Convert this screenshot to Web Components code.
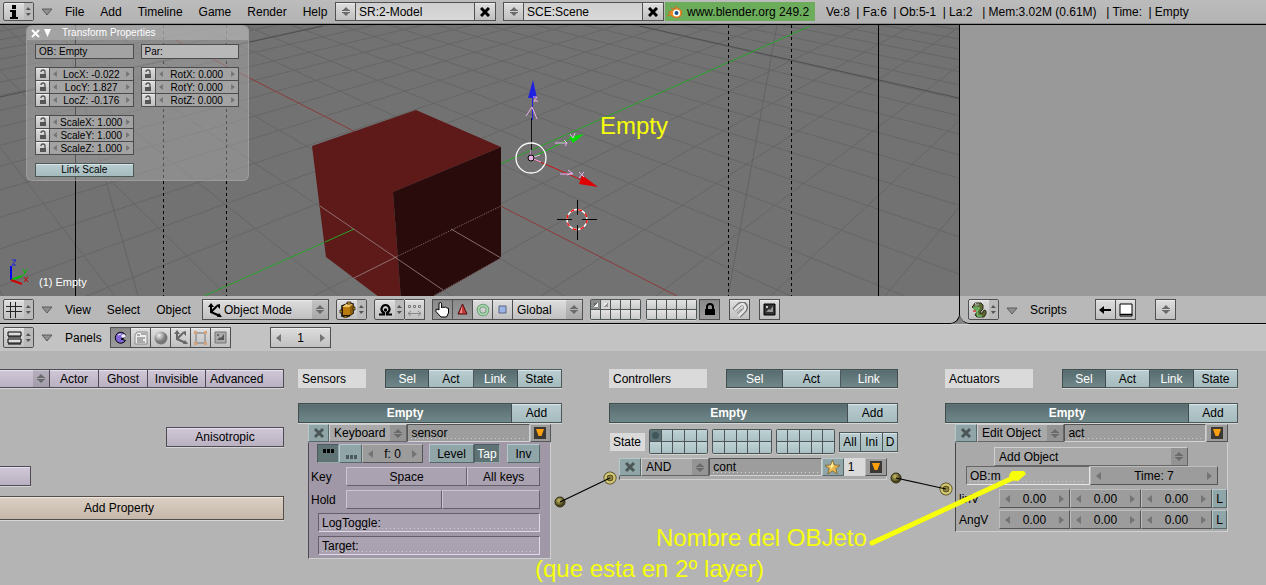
<!DOCTYPE html>
<html lang="en">
<head>
<meta charset="utf-8">
<title>Blender</title>
<style>
  body { margin: 0; background: #b4b4b4; color: #000; font: 12px/14px "Liberation Sans", Arial, sans-serif; }
</style>
</head>
<body>
<bl-app></bl-app>

<script>
const BASE = `
  *, :host { box-sizing: border-box; }
  :host { display: block; min-width: 0; }
  button, input, select { font: inherit; color: inherit; margin: 0; padding: 0; min-width: 0; border-radius: 0; outline: 0; }
  svg { display: block; }
`;

function define(name, css, html, setup) {
  const tpl = document.createElement('template');
  tpl.innerHTML = `<style>${BASE}${css}</style>${html}`;
  customElements.define(name, class extends HTMLElement {
    constructor() {
      super();
      this.attachShadow({ mode: 'open' }).append(tpl.content.cloneNode(true));
    }
    connectedCallback() { if (setup) setup.call(this, this.shadowRoot); }
  });
}

/* ---------- icons ---------- */
const ICONS = {
  info: [14, 16, `<path d="M5 1h4v4H5zM3 6h6v7h2v2H3v-2h2V8H3z" fill="#000"/>`],
  combo: [10, 9, `<path d="M5 0 8 3H2zM1 3h8v1H1zM1 5h8v1H1zM5 9 2 6h6z" fill="#6a6a6a"/>`],
  small: [5, 10, `<path d="M2 0 5 3H0zM2 9 0 6h5z" fill="#555"/>`],
  fold: [12, 8, `<path d="M1 1h10L6 7z" fill="#909090" stroke="#5c5c5c"/>`],
  x: [10, 10, `<path d="M1 1 9 9M9 1 1 9" stroke="#000" stroke-width="3"/>`],
  xdim: [12, 12, `<path d="M2 2l8 8M10 2l-8 8" stroke="#4b5657" stroke-width="3"/>`],
  grid: [16, 16, `<path d="M4.500 0v16M9.500 0v16M0 4.500h16M0 9.500h16" stroke="#222"/>`],
  rows: [15, 14, `<path d="M1 1h13v4H1zM1 8h13v4H1z" fill="#ddd" stroke="#000"/><path d="M1 6h13M1 13h13" stroke="#000"/>`],
  blender: [16, 14, `<path d="M8 1 15 6 14 11 10 13 6 12 4 10 0 11 4 8 1 7 7 5 4 3 9 4z" fill="#f08a24" stroke="#c8621a" stroke-width=".5"/><circle cx="9.500" cy="8" r="3.600" fill="#fff"/><circle cx="9.500" cy="8" r="2" fill="#1d4f86"/>`],
  mode: [16, 15, `<path d="M4 2v7l9 4M4 9l6-6" fill="none" stroke="#000" stroke-width="2"/><path d="M4 0 7 4H1zM13 1v5L9 2zM15 14l-5 0 2-4z" fill="#000"/>`],
  axes: [16, 15, `<path d="M4 2v7l9 4M4 9l6-6" fill="none" stroke="#666" stroke-width="2"/><path d="M4 0 7 4H1zM13 1v5L9 2zM15 14l-5 0 2-4z" fill="#666"/>`],
  cube: [17, 17, `<path d="M3 5 8 3h6v9l-4 3H3z" fill="#b77b10" stroke="#000" stroke-width="1.500"/><path d="M3 6 7 3h7l-4 3z" fill="#f2c86c"/><path d="M11 6l3-3v9l-3 3z" fill="#8f5f08"/><path d="M8 1h4v2H8zM5 15h3v2H5zM1 9h2v3H1zM14 6h2v3h-2z" fill="#e0a83a" stroke="#000" stroke-width=".7"/>`],
  pivot: [15, 15, `<path d="M1 12.500h5V11Q3 9 3.500 6.500 4.500 3 7.500 3T11.500 6.500Q12 9 9 11v1.500h5" fill="none" stroke="#000" stroke-width="2.200"/><circle cx="7.500" cy="8" r="1.700"/>`],
  center: [15, 14, `<path d="M1.500 2.500h2v2h-2zM6.500 2.500h2v2h-2zM11.500 2.500h2v2h-2z" fill="#ddd" stroke="#777"/><path d="M1 10.500h13M4 8l-3 2.500L4 13M11 8l3 2.500-3 2.500" stroke="#888" fill="none"/>`],
  hand: [17, 17, `<path d="M5 9V3q0-1.500 1.300-1.500T7.600 3v4l1-1 1.500.500 1.300-.500 1.500 1 1.600.300V12l-2 4H7L2 10.500Q1.300 8 3 8z" fill="#fff" stroke="#000"/>`],
  cone: [11, 13, `<path d="M5.500 1 10 11H1z" fill="#c93b3b" stroke="#501010"/><path d="M5 3 3 10h2z" fill="#f19a9a"/>`],
  ring: [14, 14, `<circle cx="7" cy="7" r="4.500" fill="none" stroke="#5f8f68" stroke-width="3.500"/><circle cx="7" cy="7" r="4.500" fill="none" stroke="#a6d7ae" stroke-width="2"/>`],
  square: [9, 9, `<path d="M1 1h7v7H1z" fill="#9db4e6" stroke="#5b6482"/>`],
  lock: [12, 13, `<path d="M3 6V4q0-3 3-3t3 3v2" fill="none" stroke="#000" stroke-width="2"/><path d="M1 6h10v6H1z" fill="#000"/>`],
  open: [8, 10, `<path d="M2 3q0-2 2-2t2 2v2" fill="none" stroke="#555" stroke-width="1.300"/><path d="M1 5h6v4H1z" fill="#555"/>`],
  magnet: [16, 16, `<path d="M2 8 7 3q4-3 6 0 2 3-1 6l-5 5" fill="none" stroke="#777" stroke-width="4.500"/><path d="M2.500 8 7 3.500q4-3 5.500 0 2 3-1 5.500L6.500 14" fill="none" stroke="#e5e5e5" stroke-width="2.500"/><path d="M5 11 10 7" stroke="#888"/>`],
  render: [13, 13, `<path d="M1 1h11v11H1z" fill="#333" stroke="#000"/><path d="M3 9 6 6l1 1 3-4v6z" fill="#999"/><path d="M3 3h2v2H3z" fill="#ccc"/>`],
  scene: [13, 13, `<path d="M1 1h11v11H1z" fill="#aaa" stroke="#777"/><path d="M3 9 6 6l1 1 3-4v6z" fill="#555"/><path d="M3 3h2v2H3z" fill="#666"/>`],
  pac: [13, 13, `<path d="M11.500 4A5.500 5.500 0 1 0 11.500 9.500L7 8l3-1z" fill="#8064d8" stroke="#000"/><path d="M4 4l3-1M8 4h3v2H8z" stroke="#eee" fill="#fff"/>`],
  script: [14, 14, `<path d="M3 1h10v12H1V4z" fill="#eee" stroke="#888"/><path d="M3 4h3M7 3h5M3 7h8M3 9h6M3 11h8" stroke="#666"/>`],
  ball: [14, 14, `<defs><radialGradient id="b" cx=".35" cy=".3"><stop offset="0" stop-color="#eee"/><stop offset="1" stop-color="#777"/></radialGradient></defs><circle cx="7" cy="7" r="6.500" fill="url(#b)"/>`],
  edit: [13, 14, `<path d="M2 2h9v10H2z" fill="none" stroke="#777"/><path d="M0 0h3v3H0zM10 0h3v3h-3zM0 11h3v3H0zM10 11h3v3h-3z" fill="#d7a077"/>`],
  snake: [16, 16, `<path d="M2 4 4 1h6l2 2v4l-2 2-1 2h3V9l2-1 1 1v3l-2 3H6l-2-2 3-5-4-1-2-2z" fill="#5f6a33" stroke="#2a2d1a"/><path d="M2 6h6l-2 4 1 4h4M3 8h4" fill="none" stroke="#69c069" stroke-width="1.500"/><path d="M2 9h3" stroke="#d33" stroke-width="1.500"/><path d="M4 1.500h1v3M7 1.500v2" stroke="#bcd" fill="none"/>`],
  back: [13, 10, `<path d="M0 5 5 1v3h7v2H5v3z" fill="#000"/>`],
  screen: [14, 14, `<path d="M1 1h12v12H1z" fill="#fff" stroke="#000"/><path d="M1 11.500h12" stroke="#000" stroke-width="1.500"/>`],
  tri: [12, 12, `<path d="M0 0h12v12H0z" fill="#3b3833"/><path d="M2 2h8L7.500 9h-3z" fill="#fb9f0c"/>`],
  star: [15, 14, `<path d="M7.500 0 9.500 5l5.500.300-4.200 3.400L12.300 14 7.500 11 2.700 14l1.500-5.300L0 5.300 5.500 5z" fill="#e8b84c" stroke="#6c5a30" stroke-width=".7"/><path d="M7.500 2 8.500 6 6 9 5 12 6 7 3 6l3-.500z" fill="#fff0a0"/>`],
  pulseon: [12, 12, `<path d="M1 1h3v4H1zM5 1h3v4H5zM9 1h3v4H9z" fill="#000"/>`],
  pulseoff: [12, 12, `<path d="M1 7h3v4H1zM5 7h3v4H5zM9 7h3v4H9z" fill="#4e5b5d"/>`],
  close: [9, 9, `<path d="M1 1 8 8M8 1 1 8" stroke="#fff" stroke-width="2"/>`],
  down: [7, 8, `<path d="M0 0h7L3.500 8z" fill="#fff"/>`],
};
define('bl-icon', `:host { display: inline-block; flex: none; }`, `<span></span>`, function (root) {
  const [w, h, body] = ICONS[this.getAttribute('name')];
  root.querySelector('span').innerHTML = `<svg width="${w}" height="${h}" viewBox="0 0 ${w} ${h}" aria-hidden="true">${body}</svg>`;
});

/* ---------- theme shared by the controls ---------- */
const TONES = `
  :host { --bg: linear-gradient(#dedede, #c0c0c0); --tl: #505050; --br: #505050; --in: #ececec; }
  :host([tone=pressed]) { --bg: linear-gradient(#8a8a8a, #9c9c9c); --in: #868686; }
  :host([tone=teal]) { --bg: linear-gradient(#bacdd0, #a5bbbe); --tl: #4c5758; --br: #4c5758; --in: #d8e6e8; }
  :host([tone=dark]) { --bg: linear-gradient(#566b6d, #70878a); --tl: #424d4e; --br: #424d4e; --in: #5d7375; color: #fff; }
  :host([tone=lilac]) { --bg: linear-gradient(#d0c8d7, #b9b1c1); --tl: #4f4b53; --br: #4f4b53; --in: #e4def0; }
  :host([tone=sand]) { --bg: linear-gradient(#dcd0c4, #c5b8ab); --tl: #544e49; --br: #544e49; --in: #eee6de; }
  :host([tone=flat]) { --bg: #a9a9a9; --tl: #cfcfcf; --br: #666; --in: transparent; }
  :host([tone=flatnum]) { --bg: #9c9c9c; --tl: #bdbdbd; --br: #555; --in: transparent; }
  :host([tone=flatteal]) { --bg: #90a5a8; --tl: #b6c8ca; --br: #56686a; --in: transparent; }
  :host([tone=flatdark]) { --bg: #5f7375; --tl: #4d5d5f; --br: #95a8aa; --in: transparent; color: #fff; }
  :host([tone=flatlilac]) { --bg: #aaa2b0; --tl: #ccc5d3; --br: #655f6b; --in: transparent; }
  :host([tone=glass]) { --bg: #a3a3a3; --tl: #4c4c4c; --br: #4c4c4c; --in: transparent; }
  :host([tone=glasslight]) { --bg: #b8b8b8; --tl: #4c4c4c; --br: #4c4c4c; --in: transparent; }
  .face { width: 100%; height: 100%; border: 1px solid; border-color: var(--tl) var(--br) var(--br) var(--tl);
    background: var(--bg); box-shadow: inset 0 1px var(--in); }
  :host([join]) .face { border-left-width: 0; }
  :host([lift]) { box-shadow: 0 1px #d6d6d6; }
`;

define('bl-button', TONES + `
  button { display: flex; align-items: center; justify-content: center; white-space: nowrap; overflow: hidden; }
  :host([left]) button { justify-content: flex-start; padding-left: 4px; }
  :host([strong]) { font-weight: 700; }
`, `<button type="button" class="face"><slot></slot></button>`, function (root) {
  if (this.title) root.querySelector('button').setAttribute('aria-label', this.title);
});

define('bl-menu', TONES + `
  .face { display: flex; align-items: stretch; position: relative; }
  select { appearance: none; flex: 1; border: 0; background: none; padding: 0 0 0 4px; }
  :host([mark]) select { padding-left: 21px; }
  slot[name=mark]::slotted(*) { position: absolute; left: 4px; top: 3px; }
  i { width: 16px; display: flex; align-items: center; justify-content: center; background: rgba(0,0,0,.12); pointer-events: none; }
`, `<div class="face"><slot name="mark"></slot><select><option></option></select><i><bl-icon name="combo"></bl-icon></i></div>`, function (root) {
  root.querySelector('option').textContent = this.getAttribute('value');
  root.querySelector('select').setAttribute('aria-label', this.getAttribute('label') || 'Menu');
});

define('bl-text', TONES + `
  :host([tone=sunk]) { --bg: #9d9d9d; --tl: #555; --br: #d2d2d2; --in: transparent; }
  :host([tone=sunkgray]) { --bg: #a9a9a9; --tl: #666; --br: #e6e6e6; --in: transparent; }
  :host([tone=sunklilac]) { --bg: #aaa2b0; --tl: #655f6b; --br: #e0d9e8; --in: transparent; }
  :host([tone=field]) { --bg: linear-gradient(#cfcfcf, #d9d9d9); --in: transparent; }
  .face { position: relative; }
  input { display: block; width: 100%; height: 100%; border: 0; background: none; padding: 0 3px; }
  :host([dots]) .face::after { content: ""; position: absolute; left: 3px; right: 3px; bottom: 2px; height: 1px;
    background: repeating-linear-gradient(90deg, #cfcfcf 0 1px, transparent 1px 4px); }
`, `<div class="face"><input type="text"></div>`, function (root) {
  const i = root.querySelector('input');
  i.value = this.getAttribute('value') || '';
  i.setAttribute('value', i.value);
  i.setAttribute('aria-label', this.getAttribute('label') || i.value);
});

define('bl-number', TONES + `
  .face { display: flex; align-items: center; padding: 0 5px; }
  :host([tone=glass]) .face { padding: 0 3px; }
  :host([tone=glass]) svg { width: 4px; height: 6px; }
  input { flex: 1; width: 0; height: 100%; border: 0; background: none; text-align: center; }
  svg { flex: none; width: 5px; height: 8px; fill: #747474; }
`, `<div class="face"><svg viewBox="0 0 5 8"><path d="M5 0v8L0 4z"/></svg><input type="text"><svg viewBox="0 0 5 8"><path d="M0 0v8l5-4z"/></svg></div>`, function (root) {
  const i = root.querySelector('input');
  i.value = this.getAttribute('value');
  i.setAttribute('value', i.value);
  i.setAttribute('aria-label', this.getAttribute('label') || i.value);
});

define('bl-editor-type', TONES + `
  :host { flex: none; width: 31px; height: 21px; }
  button { display: flex; border-radius: 2px; }
  span { flex: 1; align-self: stretch; display: flex; align-items: center; justify-content: center; }
  i { width: 9px; align-self: stretch; display: flex; align-items: center; justify-content: center; background: #bababa; }
`, `<button type="button" class="face"><span><slot></slot></span><i><bl-icon name="small"></bl-icon></i></button>`, function (root) {
  root.querySelector('button').setAttribute('aria-label', this.title || 'Editor type');
});

define('bl-layers', `
  :host { flex: none; width: 51px; height: 21px; --cell: linear-gradient(#e4e4e4, #cacaca); --on: #8c8c8c; }
  :host([states]) { width: 60px; height: 25px; --cell: linear-gradient(#bfd2d5, #a9c0c3); --on: #5d7375; }
  div { display: grid; grid-template: 1fr 1fr / repeat(5, 1fr); gap: 1px; padding: 1px; width: 100%; height: 100%; background: #4e5556; border-radius: 2px; box-shadow: 0 1px #d0d0d0; }
  button { border: 0; background: var(--cell); }
  button[aria-pressed=true] { background: var(--on); }
  button.used { background: linear-gradient(135deg, #eee 50%, #999 50%) center / 4px 4px no-repeat, #d6d6d6; }
  button.used[aria-pressed=true] { background: linear-gradient(135deg, #666 50%, #eee 50%) center / 4px 4px no-repeat, var(--on); }
  :host([states]) button.used[aria-pressed=true] { background: radial-gradient(circle, #40565a 3px, var(--on) 4px); }
`, `<div></div>`, function (root) {
  const on = this.getAttribute('on') || '', used = this.getAttribute('used') || '';
  root.querySelector('div').innerHTML = Array.from({ length: 10 }, (_, n) =>
    `<button type="button" aria-label="Layer ${n + 1}" aria-pressed="${on.includes(n)}"${used.includes(n) ? ' class="used"' : ''}></button>`).join('');
});

/* ---------- top bar ---------- */
define('bl-top-bar', `
  :host { background: linear-gradient(#bcbcbc, #b2b2b2); border-bottom: 1px solid #000; box-shadow: inset 0 -1px #8a8a8a; height: 25px; }
  header { display: flex; padding: 2px 0 0 3px; height: 22px; white-space: nowrap; overflow: hidden; }
  bl-editor-type { height: 19px; }
  bl-icon.fold { align-self: center; margin: 0 12px 0 7px; }
  nav { flex: 0 0 270px; display: flex; align-items: center; gap: 16px; }
  a { color: inherit; text-decoration: none; }
  .combo { display: flex; flex: 0 0 161px; margin-right: 7px; height: 19px; }
  .combo.last { margin-right: 1px; }
  .combo bl-button { flex: 0 0 21px; }
  .combo bl-text { flex: 1; }
  .site { flex: 0 0 150px; height: 19px; background: #6cad5c; display: flex; align-items: center; gap: 4px; padding-left: 2px; }
  .stats { display: flex; align-items: center; gap: 3px; padding-left: 11px; white-space: pre; }
`, `<header>
  <bl-editor-type title="Info"><bl-icon name="info"></bl-icon></bl-editor-type>
  <bl-icon class="fold" name="fold"></bl-icon>
  <nav><a href="#">File</a><a href="#">Add</a><a href="#">Timeline</a><a href="#">Game</a><a href="#">Render</a><a href="#">Help</a></nav>
  <div class="combo"><bl-button title="Browse screens"><bl-icon name="combo"></bl-icon></bl-button><bl-text join tone="field" label="Screen" value="SR:2-Model"></bl-text><bl-button join title="Delete screen"><bl-icon name="x"></bl-icon></bl-button></div>
  <div class="combo last"><bl-button title="Browse scenes"><bl-icon name="combo"></bl-icon></bl-button><bl-text join tone="field" label="Scene" value="SCE:Scene"></bl-text><bl-button join title="Delete scene"><bl-icon name="x"></bl-icon></bl-button></div>
  <a class="site" href="#"><bl-icon name="blender"></bl-icon>www.blender.org 249.2</a>
  <div class="stats"><span>Ve:8 </span><span>| Fa:6 </span><span>| Ob:5-1 </span><span>| La:2  </span><span>| Mem:3.02M (0.61M)  </span><span>| Time: </span><span>| Empty</span></div>
</header>`);

/* ---------- 3D view ---------- */
define('bl-transform-panel', `
  :host { width: 223px; font-size: 10px; line-height: 12px; border-radius: 6px; background: rgba(165,165,165,.5); border: 1px solid rgba(175,175,175,.5); overflow: hidden; }
  h2 { margin: 0; height: 14px; padding-left: 4px; display: flex; align-items: center; gap: 4px; background: rgba(180,180,180,.6); color: #fff; font-size: 10px; font-weight: 400; }
  h2 span { padding-left: 7px; }
  .body { padding: 4px 9px 3px 8px; display: grid; grid-template-columns: 1fr 1fr; column-gap: 7px; row-gap: 8px; align-items: start; }
  .body > bl-text { height: 15px; }
  .rows { display: grid; grid-template-columns: 15px 1fr; grid-auto-rows: 13px; padding-bottom: 1px; }
  .rows > * { margin-bottom: -1px; }
  .link { height: 14px; }
`, `<h2><bl-icon name="close"></bl-icon><bl-icon name="down"></bl-icon><span>Transform Properties</span></h2>
<div class="body">
  <bl-text tone="glass" label="Object name" value="OB: Empty"></bl-text><bl-text tone="glasslight" label="Parent" value="Par:"></bl-text>
  <div class="rows" data-v="LocX: -0.022|LocY: 1.827|LocZ: -0.176"></div>
  <div class="rows" data-v="RotX: 0.000|RotY: 0.000|RotZ: 0.000"></div>
  <div class="rows" data-v="ScaleX: 1.000|ScaleY: 1.000|ScaleZ: 1.000"></div><span></span>
  <bl-button class="link" tone="teal">Link Scale</bl-button>
</div>`, function (root) {
  for (const r of root.querySelectorAll('.rows'))
    r.innerHTML = r.dataset.v.split('|').map(v =>
      `<bl-button title="Lock ${v.split(':')[0]}"><bl-icon name="open"></bl-icon></bl-button><bl-number join tone="glass" value="${v}"></bl-number>`).join('');
});

define('bl-viewport', `
  :host { position: relative; background: #727272; overflow: hidden; flex: 1; min-height: 200px; }
  svg { position: absolute; inset: 0; width: 100%; height: 100%; }
  bl-transform-panel { position: absolute; left: 26px; top: 0; }
  p { position: absolute; margin: 0; }
  .note { left: 600px; top: 87px; font-size: 24px; line-height: 28px; color: #f7ff0a; }
  .name { left: 39px; bottom: 7px; font-size: 11px; color: #fff; }
`, `<svg viewBox="0 25 959 271" preserveAspectRatio="xMinYMin slice" aria-hidden="true">
  <g id="grid" stroke="#666" fill="none"></g>
  <g stroke="#636363"><path d="M62 25 138 296M777 25 728 296"/></g>
  <g stroke="#4f4f4f"><path d="M0 97 323 26M640 26 959 98"/></g>
  <path d="M175 40 677 296" stroke="#8d3a3a"/>
  <path d="M204 296 810 26" stroke="#27a327"/>
  <path d="M312 146 416 110 501 147 393 192 401 300H383L326 257z" fill="#5e1919"/>
  <path d="M393 192 501 147V258L427 300H401z" fill="#290b0b"/>
  <g stroke="#9a8585" stroke-width=".8" fill="none"><path d="M320 206 443 290M354 278 396 257M451 229 501 258"/><path d="M396 257 501 206M501 258 433 296" stroke-dasharray="1 1"/></g>
  <path d="M325 242 354 229" stroke="#27a327"/>
  <path d="M75.500 25V296M878.500 25V296" stroke="#000"/>
  <path d="M163.500 25V296M226.500 25V296M728.500 25V296M791.500 25V296" stroke="#000" stroke-dasharray="3 3"/>
  <g fill="none">
    <path d="M531.500 158V118" stroke="#111"/><path d="M532.500 120V97" stroke="#2222e0"/><path d="M533 80 537 98H528z" fill="#2020e0"/>
    <path d="M531 158 572 138" stroke="#10c010"/><path d="M569 137 584 134 573 143z" fill="#00dc00"/>
    <path d="M531 158 584 181" stroke="#d01010"/><path d="M582 175 598 187 579 184z" fill="#e00000"/>
    <g stroke="#f0b0f0"><path d="M526 116l6-9 5 12M533 97h4l-3 4h4M531 150v8l10 4M531 158l9-3M555 143h12l-3-3M565 146l2-3M570 134l3 4 2-5M560 174h13l-5-4M567 175l5-2M579 172l5 5M584 172l-5 6"/></g>
    <circle cx="531" cy="158" r="15" stroke="#fff" stroke-width="1.300"/><circle cx="531" cy="158" r="3" fill="#e5b4e5" stroke="#000"/>
    <circle cx="577" cy="219.500" r="10" stroke="#fff" stroke-width="1.300"/><circle cx="577" cy="219.500" r="10" stroke="#f00" stroke-width="1.300" stroke-dasharray="4 4"/>
    <path d="M557 219.500h15M582 219.500h15M577.500 200v15M577.500 225v15" stroke="#000"/>
    <path d="M11 280V266" stroke="#0000f0" stroke-width="2"/><path d="M11 280 22 276" stroke="#00c000" stroke-width="2"/><path d="M11 280 22 284" stroke="#d00000" stroke-width="2"/>
    <path d="M12 260h4l-4 5h4" stroke="#2020e0"/><path d="M23 269l2 4 2-4M25 273l-2 3" stroke="#00c000"/><path d="M24 277l4 5M28 277l-4 5" stroke="#d00000"/>
  </g>
</svg>
<bl-transform-panel></bl-transform-panel>
<p class="note">Empty</p>
<p class="name">(1) Empty</p>`, function (root) {
  /* Floor grid: lines through the two vanishing points, one per unit along each axis. */
  const O = [456, 183], VX = [-250, -177], VY = [1286, -183];
  let d = '';
  const family = (along, to, w) => {
    for (let k = -15; k <= 16; k++) {
      if (k === 0) continue;
      const s = 1 + k * w;
      const p = [(O[0] + k * w * along[0]) / s, (O[1] + k * w * along[1]) / s];
      const q = [p[0] + (p[0] - to[0]) * 9, p[1] + (p[1] - to[1]) * 9];
      d += `M${to[0]} ${to[1]}L${q[0].toFixed(1)} ${q[1].toFixed(1)}`;
    }
  };
  family(VY, VX, 0.0556);
  family(VX, VY, 0.0570);
  root.getElementById('grid').innerHTML = `<path d="${d}"/>`;
});

define('bl-view-header', `
  :host { height: 27px; background: #b8b8b8; }
  div { display: flex; padding: 3px 0 0 3px; }
  div > * { flex: none; height: 21px; }
  bl-icon.fold { height: 8px; align-self: center; margin: 0 12px 0 7px; }
  nav { width: 137px; display: flex; align-items: center; gap: 16px; }
  a { color: inherit; text-decoration: none; }
  .b { width: 20px; }
  .b.first { width: 21px; }
  .g { margin-left: 7px; }
`, `<div>
  <bl-editor-type title="3D View"><bl-icon name="grid"></bl-icon></bl-editor-type>
  <bl-icon class="fold" name="fold"></bl-icon>
  <nav><a href="#">View</a><a href="#">Select</a><a href="#">Object</a></nav>
  <bl-menu mark style="width:127px" label="Mode" value="Object Mode"><bl-icon slot="mark" name="mode"></bl-icon></bl-menu>
  <bl-editor-type class="g" title="Draw type"><bl-icon name="cube"></bl-icon></bl-editor-type>
  <bl-editor-type class="g" title="Pivot"><bl-icon name="pivot"></bl-icon></bl-editor-type>
  <bl-button join class="b" title="Move centers"><bl-icon name="center"></bl-icon></bl-button>
  <bl-button class="g b first" tone="pressed" title="Manipulator"><bl-icon name="hand"></bl-icon></bl-button>
  <bl-button join class="b" tone="pressed" title="Translate"><bl-icon name="cone"></bl-icon></bl-button>
  <bl-button join class="b" title="Rotate"><bl-icon name="ring"></bl-icon></bl-button>
  <bl-button join class="b" title="Scale"><bl-icon name="square"></bl-icon></bl-button>
  <bl-menu join style="width:70px" label="Orientation" value="Global"></bl-menu>
  <bl-layers class="g" on="0" used="01"></bl-layers>
  <bl-layers style="margin-left:5px"></bl-layers>
  <bl-button class="b first" style="margin-left:2px" tone="pressed" title="Lock layers"><bl-icon name="lock"></bl-icon></bl-button>
  <bl-button class="b first" style="margin-left:9px" title="Snap"><bl-icon name="magnet"></bl-icon></bl-button>
  <bl-button class="b first" style="margin-left:9px" title="Render"><bl-icon name="render"></bl-icon></bl-button>
</div>`);

define('bl-scripts-area', `
  :host { display: flex; flex-direction: column; background: #999; border-bottom: 1px solid #000; border-bottom-left-radius: 10px; overflow: hidden; }
  main { flex: 1; }
  footer { height: 27px; background: #b8b8b8; display: flex; padding: 3px 0 0 8px; }
  footer > * { flex: none; height: 21px; }
  bl-icon.fold { height: 8px; align-self: center; margin: 0 12px 0 7px; }
  a { width: 65px; display: flex; align-items: center; color: inherit; text-decoration: none; }
`, `<main></main><footer>
  <bl-editor-type title="Scripts"><bl-icon name="snake"></bl-icon></bl-editor-type>
  <bl-icon class="fold" name="fold"></bl-icon><a href="#">Scripts</a>
  <bl-button style="width:21px" title="Back"><bl-icon name="back"></bl-icon></bl-button>
  <bl-button join style="width:20px" title="Full screen"><bl-icon name="screen"></bl-icon></bl-button>
  <bl-button style="width:21px;margin-left:19px" title="Browse"><bl-icon name="combo"></bl-icon></bl-button>
</footer>`);

/* ---------- logic editor ---------- */
define('bl-buttons-header', `
  :host { height: 27px; background: #c3c3c3; border-top: 1px solid #d0d0d0; }
  div { display: flex; padding: 2px 0 0 3px; }
  div > * { flex: none; height: 21px; }
  bl-icon.fold { height: 8px; align-self: center; margin: 0 12px 0 7px; }
  .t { width: 45px; display: flex; align-items: center; }
  .b { width: 20px; }
`, `<div>
  <bl-editor-type title="Buttons"><bl-icon name="rows"></bl-icon></bl-editor-type>
  <bl-icon class="fold" name="fold"></bl-icon><span class="t">Panels</span>
  <bl-button style="width:21px" tone="pressed" title="Logic"><bl-icon name="pac"></bl-icon></bl-button>
  <bl-button join class="b" title="Script"><bl-icon name="script"></bl-icon></bl-button>
  <bl-button join class="b" title="Shading"><bl-icon name="ball"></bl-icon></bl-button>
  <bl-button join class="b" title="Object"><bl-icon name="axes"></bl-icon></bl-button>
  <bl-button join class="b" title="Editing"><bl-icon name="edit"></bl-icon></bl-button>
  <bl-button join class="b" title="Scene"><bl-icon name="scene"></bl-icon></bl-button>
  <bl-number style="width:61px;margin-left:39px" label="Frame" value="1"></bl-number>
</div>`);

/* The panel is scrolled sideways: its left part lies outside the window. */
define('bl-properties', `
  :host { display: flex; flex-direction: column; margin-left: -46px; }
  .row { display: flex; height: 19px; margin-bottom: 39px; }
  .row > * { min-width: 0; }
`, `<div class="row">
  <bl-menu lift tone="lilac" style="flex:96" label="Physics" value=""></bl-menu><bl-button lift join tone="lilac" style="flex:49">Actor</bl-button><bl-button lift join tone="lilac" style="flex:49">Ghost</bl-button><bl-button lift join tone="lilac" style="flex:58">Invisible</bl-button><bl-button lift join left tone="lilac" style="flex:78">Advanced</bl-button>
</div>
<bl-button lift tone="lilac" style="height:20px;width:118px;align-self:flex-end">Anisotropic</bl-button>
<bl-button lift tone="lilac" title="Radius" style="height:20px;width:77px;margin-top:19px"></bl-button>
<bl-button lift tone="sand" style="height:24px;margin-top:10px">Add Property</bl-button>`);

define('bl-brick-column', `
  .top { display: flex; height: 19px; margin-bottom: 15px; }
  .label { background: #dadada; text-indent: 4px; line-height: 20px; min-width: 0; }
  .filters { display: flex; }
  .filters > *, .bar > * { min-width: 0; }
  .bar { display: flex; height: 20px; }
`, `<div class="top"><span class="label"></span><span class="space"></span><div class="filters"></div></div>
<div class="bar"><bl-button lift strong tone="dark">Empty</bl-button><bl-button lift join tone="teal">Add</bl-button></div>
<slot></slot>`, function (root) {
  const $ = s => root.querySelector(s);
  const [label, space, filters, bar, add] = this.getAttribute('sizes').split(' ');
  $('.label').textContent = this.getAttribute('label');
  $('.label').style.flex = label;
  $('.space').style.flex = space;
  $('.filters').style.flex = filters;
  $('.bar').children[0].style.flex = bar;
  $('.bar').children[1].style.flex = add;
  $('.filters').innerHTML = this.getAttribute('filters').split(' ').map((t, i) =>
    `<bl-button lift ${i ? 'join' : ''} tone="${t === 'Sel' || t === 'Link' ? 'dark' : 'teal'}" style="flex:1">${t}</bl-button>`).join('');
});

define('bl-brick', `
  .head { display: flex; height: 18px; }
  .head > * { min-width: 0; }
  .body { border: 1px solid; border-color: transparent #cfcfcf #cfcfcf #444; background: #a9a9a9; }
  :host([lilac]) .body { background: #a198a7; border-left-color: #4f4856; }
`, `<div class="head"><slot name="head"></slot></div><div class="body"><slot></slot></div>`);

define('bl-keyboard-sensor', `
  :host { margin: 1px 11px 0 10px; }
  .row { display: flex; height: 19px; margin-bottom: 4px; padding-left: 2px; }
  .row > * { min-width: 0; }
  .row span { flex: 35; align-self: center; }
  .body { padding: 1px 10px 0 0; }
`, `<bl-brick lilac>
  <bl-button slot="head" tone="flatteal" style="flex:21" title="Delete sensor"><bl-icon name="xdim"></bl-icon></bl-button>
  <bl-menu slot="head" tone="flat" style="flex:78" label="Sensor type" value="Keyboard"></bl-menu>
  <bl-text slot="head" dots tone="sunk" style="flex:122" label="Sensor name" value="sensor"></bl-text>
  <bl-button slot="head" tone="flatnum" style="flex:21" title="Collapse"><bl-icon name="tri"></bl-icon></bl-button>
  <div class="body">
    <div class="row" style="padding-left:8px"><bl-button tone="flatdark" style="flex:22" title="Pulse true"><bl-icon name="pulseon"></bl-icon></bl-button><bl-button tone="flatteal" style="flex:23" title="Pulse false"><bl-icon name="pulseoff"></bl-icon></bl-button><bl-number tone="flatnum" style="flex:61" label="Frequency" value="f: 0"></bl-number><i style="flex:6"></i><bl-button tone="flatteal" style="flex:45">Level</bl-button><bl-button tone="flatdark" style="flex:26">Tap</bl-button><i style="flex:7"></i><bl-button tone="flatteal" style="flex:33">Inv</bl-button></div>
    <div class="row"><span>Key</span><bl-button tone="flatlilac" style="flex:122">Space</bl-button><bl-button tone="flatlilac" style="flex:73">All keys</bl-button></div>
    <div class="row"><span>Hold</span><bl-button tone="flatlilac" style="flex:97" title="Modifier 1"></bl-button><bl-button tone="flatlilac" style="flex:98" title="Modifier 2"></bl-button></div>
    <div class="row" style="padding-left:9px"><bl-text dots tone="sunklilac" style="flex:1" value="LogToggle:"></bl-text></div>
    <div class="row" style="padding-left:9px;margin-bottom:3px"><bl-text dots tone="sunklilac" style="flex:1" value="Target:"></bl-text></div>
  </div>
</bl-brick>`);

define('bl-controller', `
  .state { display: flex; height: 25px; margin-top: 6px; align-items: center; padding-left: 1px; }
  .state span { background: #dadada; height: 18px; width: 35px; display: flex; align-items: center; padding-left: 3px; }
  .state bl-layers { margin-left: 4px; flex: 60 1 0; }
  .state bl-button { height: 20px; }
  bl-brick { margin: 4px 11px 0 10px; }
  .strip { height: 2px; }
`, `<div class="state"><span>State</span><bl-layers states on="0" used="0"></bl-layers><bl-layers states></bl-layers><bl-layers states></bl-layers>
  <bl-button lift tone="teal" style="width:22px;margin-left:4px">All</bl-button><bl-button lift join tone="teal" style="width:22px">Ini</bl-button><bl-button lift join tone="teal" style="width:15px">D</bl-button></div>
<bl-brick>
  <bl-button slot="head" tone="flatteal" style="flex:22" title="Delete controller"><bl-icon name="xdim"></bl-icon></bl-button>
  <bl-menu slot="head" tone="flat" style="flex:68" label="Controller type" value="AND"></bl-menu>
  <bl-text slot="head" dots tone="sunk" style="flex:112" label="Controller name" value="cont"></bl-text>
  <bl-button slot="head" tone="flatteal" style="flex:22" title="Priority"><bl-icon name="star"></bl-icon></bl-button>
  <span slot="head" style="flex:21;background:#dadada;text-indent:4px;line-height:18px">1</span>
  <bl-button slot="head" tone="flatnum" style="flex:22" title="Collapse"><bl-icon name="tri"></bl-icon></bl-button>
  <div class="strip"></div>
</bl-brick>`);

define('bl-edit-object', `
  :host { margin: 1px 10px 0 10px; }
  .row { display: flex; height: 19px; }
  .row > * { min-width: 0; }
  .row span { flex: 40; align-self: center; }
  .vec { padding-left: 3px; margin-bottom: 2px; }
`, `<bl-brick>
  <bl-button slot="head" tone="flatteal" style="flex:22" title="Delete actuator"><bl-icon name="xdim"></bl-icon></bl-button>
  <bl-menu slot="head" tone="flat" style="flex:87" label="Actuator type" value="Edit Object"></bl-menu>
  <bl-text slot="head" dots tone="sunk" style="flex:141" label="Actuator name" value="act"></bl-text>
  <bl-button slot="head" tone="flatnum" style="flex:22" title="Collapse"><bl-icon name="tri"></bl-icon></bl-button>
  <div class="body">
    <div class="row" style="margin-top:4px;padding:0 39px 0 38px"><bl-menu tone="flat" style="flex:1" label="Edit mode" value="Add Object"></bl-menu></div>
    <div class="row" style="padding:0 9px 0 10px;margin-bottom:4px"><bl-text dots tone="sunkgray" style="flex:124" value="OB:m"></bl-text><bl-number tone="flatnum" style="flex:128" value="Time: 7"></bl-number></div>
    <div class="row vec"><span>linV</span><bl-number tone="flatnum" style="flex:71" label="linV X" value="0.00"></bl-number><bl-number tone="flatnum" style="flex:71" label="linV Y" value="0.00"></bl-number><bl-number tone="flatnum" style="flex:71" label="linV Z" value="0.00"></bl-number><bl-button tone="flatteal" style="flex:15">L</bl-button></div>
    <div class="row vec"><span>AngV</span><bl-number tone="flatnum" style="flex:71" label="AngV X" value="0.00"></bl-number><bl-number tone="flatnum" style="flex:71" label="AngV Y" value="0.00"></bl-number><bl-number tone="flatnum" style="flex:71" label="AngV Z" value="0.00"></bl-number><bl-button tone="flatteal" style="flex:15">L</bl-button></div>
  </div>
</bl-brick>`);

/* Wire from a ball socket to a ring socket, drawn in the gap between two columns. */
define('bl-link', `svg { overflow: visible; width: 47px; height: 216px; }`,
`<svg viewBox="0 18 47 216" aria-hidden="true"><defs><radialGradient id="g" cx=".4" cy=".35"><stop offset="0" stop-color="#c9bd6a"/><stop offset="1" stop-color="#4b431c"/></radialGradient></defs><g id="art"></g></svg>`, function (root) {
  const [x1, y1, x2, y2] = this.getAttribute('points').split(' ').map(Number);
  root.getElementById('art').innerHTML = `<circle cx="${x1}" cy="${y1}" r="5" fill="url(#g)" stroke="#2e2a12"/>
    <circle cx="${x2}" cy="${y2}" r="4.500" fill="#8f8440" stroke="#4a4320" stroke-width="4"/><circle cx="${x2}" cy="${y2}" r="4.500" fill="none" stroke="#d3c772" stroke-width="2.500"/>
    <path d="M${x1} ${y1}L${x2} ${y2}" stroke="#000" stroke-width="1.200"/>`;
});

define('bl-logic-area', `
  :host { position: relative; height: 234px; overflow: hidden; background: #b4b4b4; padding-top: 18px; }
  .cols { display: grid; grid-template-columns: minmax(0, 284fr) 14px minmax(0, 264fr) 47px minmax(0, 289fr) 47px minmax(0, 293fr); padding-right: 28px; }
  p { position: absolute; margin: 0; font-size: 24px; line-height: 28px; color: #f7ff0a; white-space: nowrap; }
  .arrow { position: absolute; left: 868px; top: 115px; }
`, `<div class="cols">
  <bl-properties></bl-properties><span></span>
  <bl-brick-column label="Sensors" sizes="68 19 177 214 50" filters="Sel Act Link State"><bl-keyboard-sensor></bl-keyboard-sensor></bl-brick-column>
  <bl-link points="-2 151 48 127"></bl-link>
  <bl-brick-column label="Controllers" sizes="98 19 172 239 50" filters="Sel Act Link"><bl-controller></bl-controller></bl-brick-column>
  <bl-link points="-2 127 48 138"></bl-link>
  <bl-brick-column label="Actuators" sizes="88 29 176 244 49" filters="Sel Act Link State"><bl-edit-object></bl-edit-object></bl-brick-column>
</div>
<svg class="arrow" width="162" height="82" viewBox="868 466 162 82" aria-hidden="true"><path d="M872 543 1015 477" stroke="#f7ff0a" stroke-width="5" stroke-linecap="round"/><path d="M1009 475 1012 471H1024L1026 474 1018 481 1010 480z" fill="#f7ff0a"/></svg>
<p style="left:656px;top:173px">Nombre del OBJeto</p>
<p style="left:535px;top:204px">(que esta en 2º layer)</p>`);

define('bl-app', `
  :host { display: flex; flex-direction: column; min-height: 100vh; }
  .middle { flex: 1; display: grid; grid-template-columns: minmax(0, 960fr) minmax(0, 306fr); background: #858585; }
  .view { display: flex; flex-direction: column; min-width: 0; border: solid #000; border-width: 0 1px 1px 0; border-bottom-right-radius: 10px; overflow: hidden; }
`, `<bl-top-bar></bl-top-bar>
<div class="middle"><div class="view"><bl-viewport></bl-viewport><bl-view-header></bl-view-header></div><bl-scripts-area></bl-scripts-area></div>
<bl-buttons-header></bl-buttons-header>
<bl-logic-area></bl-logic-area>`);
</script>
</body>
</html>
